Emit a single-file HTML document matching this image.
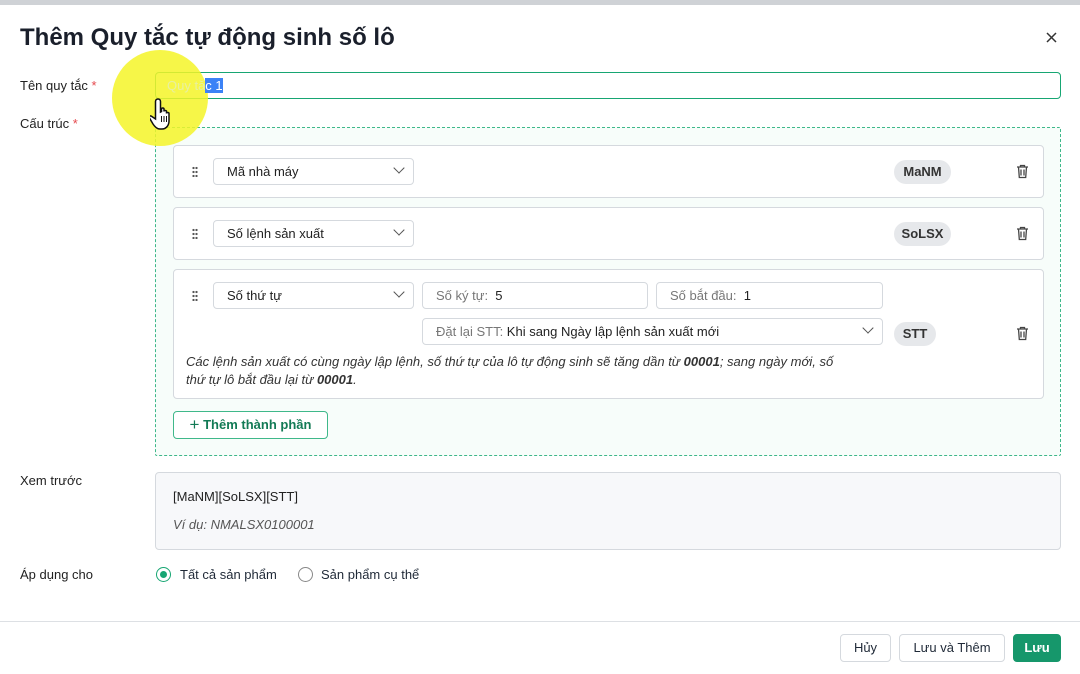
<!DOCTYPE html>
<html><head><meta charset="utf-8"><style>
*{box-sizing:border-box;margin:0;padding:0}
body{width:1080px;height:674px;position:relative;background:#fff;font-family:"Liberation Sans",sans-serif;font-size:13px;color:#1f2937;overflow:hidden}
.a{position:absolute}
.lbl{position:absolute;left:20px;font-size:13px;color:#222}
.req{color:#e5484d}
.box{position:absolute;border:1px solid #d5d9de;border-radius:4px;background:#fff}
.sel{position:absolute;border:1px solid #d5d9de;border-radius:4px;background:#fff;height:27px;line-height:25px;padding-left:13px;font-size:13px;color:#222}
.chev{position:absolute;right:10px;width:8px;height:8px;border-right:1.5px solid #555;border-bottom:1.5px solid #555;transform:rotate(45deg);top:5px}
.chip{position:absolute;background:#e6e8eb;border-radius:12px;height:24px;line-height:24px;font-weight:bold;font-size:13px;text-align:center;color:#333}
.grip{position:absolute;width:6px;height:11px;background-image:radial-gradient(circle,#555 1px,transparent 1.3px);background-size:3px 4px}
.gray{color:#777}
.btn{position:absolute;height:28px;line-height:26px;border:1px solid #d5d9de;border-radius:4px;text-align:center;font-size:13px;background:#fff}
</style></head><body>
<div class="a" style="left:0;top:0;width:1080px;height:5px;background:#cfd2d6"></div>
<div class="a" style="left:20px;top:24px;font-size:24px;font-weight:bold;color:#1a1f2b">Thêm Quy tắc tự động sinh số lô</div>
<svg class="a" style="left:1046px;top:32px" width="11" height="11"><path d="M1 1L10 10M10 1L1 10" stroke="#333" stroke-width="1.5"/></svg>

<div class="lbl" style="top:78px">Tên quy tắc <span class="req">*</span></div>
<div class="box" style="left:155px;top:72px;width:906px;height:27px;border-color:#17a673"></div>
<div class="lbl" style="top:116px">Cấu trúc <span class="req">*</span></div>
<div class="a" style="left:155px;top:127px;width:906px;height:329px;border:1px dashed #3fb88a;background:#f7fdfa;border-radius:2px"></div>

<div class="box" style="left:173px;top:145px;width:871px;height:53px"></div>
<div class="grip" style="left:192px;top:166px"></div>
<div class="sel" style="left:213px;top:158px;width:201px">Mã nhà máy<span class="chev"></span></div>
<div class="chip" style="left:894px;top:160px;width:57px">MaNM</div>
<svg class="a" style="left:1016px;top:164px" width="13" height="15" viewBox="0 0 13 15"><path d="M1 3h11M4.5 3V1.5h4V3M2.5 3l.8 10.5h6.4L10.5 3M5 5.5v6M8 5.5v6" stroke="#444" stroke-width="1.3" fill="none"/></svg>

<div class="box" style="left:173px;top:207px;width:871px;height:53px"></div>
<div class="grip" style="left:192px;top:228px"></div>
<div class="sel" style="left:213px;top:220px;width:201px">Số lệnh sản xuất<span class="chev"></span></div>
<div class="chip" style="left:894px;top:222px;width:57px">SoLSX</div>
<svg class="a" style="left:1016px;top:226px" width="13" height="15" viewBox="0 0 13 15"><path d="M1 3h11M4.5 3V1.5h4V3M2.5 3l.8 10.5h6.4L10.5 3M5 5.5v6M8 5.5v6" stroke="#444" stroke-width="1.3" fill="none"/></svg>

<div class="box" style="left:173px;top:269px;width:871px;height:130px"></div>
<div class="grip" style="left:192px;top:290px"></div>
<div class="sel" style="left:213px;top:282px;width:201px">Số thứ tự<span class="chev"></span></div>
<div class="sel" style="left:422px;top:282px;width:226px"><span class="gray">Số ký tự:</span>&nbsp; 5</div>
<div class="sel" style="left:656px;top:282px;width:227px"><span class="gray">Số bắt đầu:</span>&nbsp; 1</div>
<div class="sel" style="left:422px;top:318px;width:461px"><span class="gray">Đặt lại STT:</span> Khi sang Ngày lập lệnh sản xuất mới<span class="chev"></span></div>
<div class="chip" style="left:894px;top:322px;width:42px">STT</div>
<svg class="a" style="left:1016px;top:326px" width="13" height="15" viewBox="0 0 13 15"><path d="M1 3h11M4.5 3V1.5h4V3M2.5 3l.8 10.5h6.4L10.5 3M5 5.5v6M8 5.5v6" stroke="#444" stroke-width="1.3" fill="none"/></svg>
<div class="a" style="left:186px;top:353px;width:700px;font-style:italic;font-size:13px;line-height:18px;color:#333">Các lệnh sản xuất có cùng ngày lập lệnh, số thứ tự của lô tự động sinh sẽ tăng dần từ <b>00001</b>; sang ngày mới, số<br>thứ tự lô bắt đầu lại từ <b>00001</b>.</div>

<div class="btn" style="left:173px;top:411px;width:155px;border-color:#3fb88a;color:#127a55;font-weight:bold;background:#fff"><span style="font-size:17px;font-weight:normal;vertical-align:-1px">+</span> Thêm thành phần</div>

<div class="lbl" style="top:473px">Xem trước</div>
<div class="a" style="left:155px;top:472px;width:906px;height:78px;border:1px solid #d5d9de;border-radius:4px;background:#f7f8fa"></div>
<div class="a" style="left:173px;top:489px;color:#222">[MaNM][SoLSX][STT]</div>
<div class="a" style="left:173px;top:517px;font-style:italic;color:#555">Ví dụ: NMALSX0100001</div>

<div class="lbl" style="top:567px">Áp dụng cho</div>
<div class="a" style="left:156px;top:567px;width:15px;height:15px;border:1.5px solid #17a673;border-radius:50%"></div>
<div class="a" style="left:160px;top:571px;width:7px;height:7px;background:#17a673;border-radius:50%"></div>
<div class="a" style="left:180px;top:567px">Tất cả sản phẩm</div>
<div class="a" style="left:298px;top:567px;width:15px;height:15px;border:1px solid #888;border-radius:50%"></div>
<div class="a" style="left:321px;top:567px">Sản phẩm cụ thể</div>

<div class="a" style="left:0;top:621px;width:1080px;height:1px;background:#dde0e4"></div>
<div class="btn" style="left:840px;top:634px;width:51px">Hủy</div>
<div class="btn" style="left:899px;top:634px;width:106px">Lưu và Thêm</div>
<div class="btn" style="left:1013px;top:634px;width:48px;background:#16976b;border-color:#16976b;color:#fff;font-weight:bold">Lưu</div>

<div class="a" style="left:112px;top:50px;width:96px;height:96px;border-radius:50%;background:rgba(245,245,40,0.85)"></div>
<div class="a" style="left:167px;top:78px;font-size:13px;color:#e8f0a0"><span>Quy tă</span><span style="background:#3b82f6;color:#fff">c 1</span></div>
<svg class="a" style="left:150px;top:97px" width="30" height="36" viewBox="0 0 30 36"><path d="M8 2c1.5 0 2.5 1 2.5 2.5V15l1-.5V12c0-1.4 2.5-1.4 2.5 0v2.5c0-1.4 2.5-1.4 2.5 0v2c0-1.4 2.5-1.4 2.5 0V24c0 4-2.5 8-7 8h-2c-3 0-5-2-7-5l-3.5-6c-.8-1.5 1-2.8 2.2-1.6L5.5 22V4.5C5.5 3 6.5 2 8 2z" fill="#fff" stroke="#111" stroke-width="1.5"/><path d="M11.5 19v6M14 19v6M16.5 19v6" stroke="#111" stroke-width="1"/></svg>
</body></html>
